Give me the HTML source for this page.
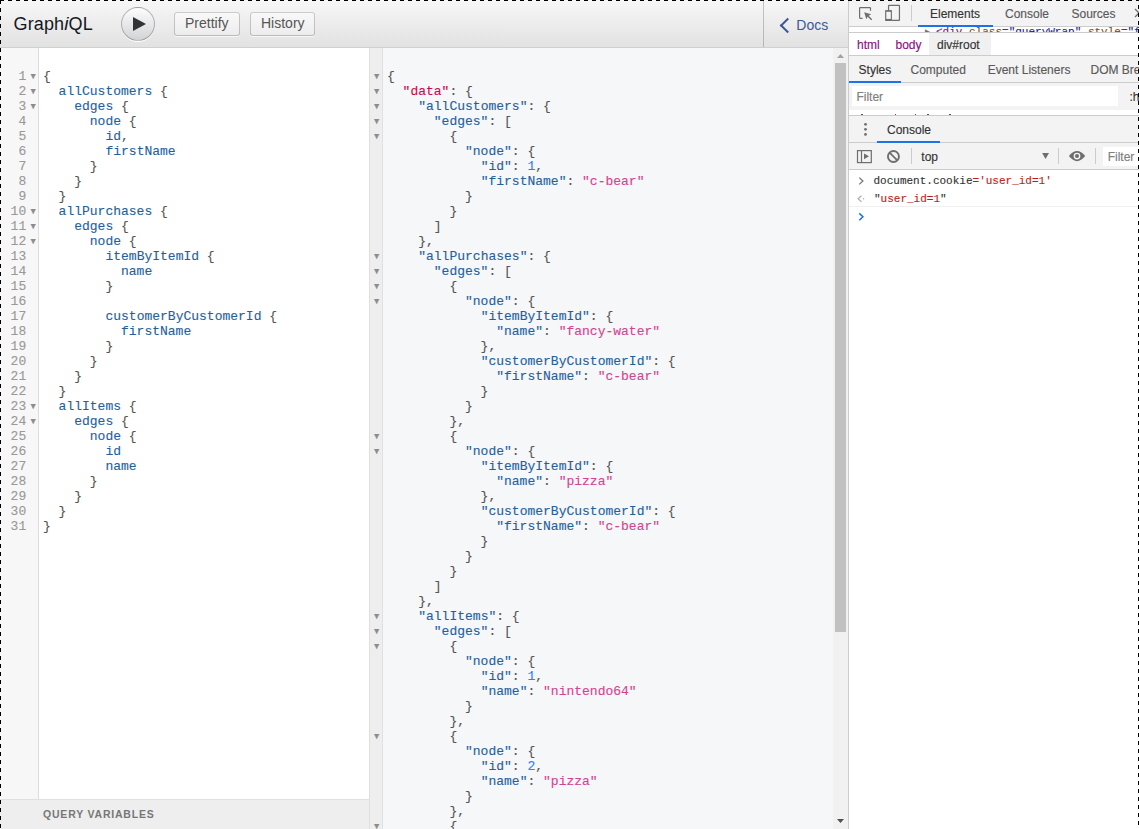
<!DOCTYPE html>
<html><head><meta charset="utf-8">
<style>
*{margin:0;padding:0;box-sizing:border-box}
html,body{width:1139px;height:829px;overflow:hidden;background:#fff}
body{position:relative;font-family:"Liberation Sans",sans-serif;color:#141823}
.abs{position:absolute}
#topbar{left:0;top:0;width:849px;height:48px;background:linear-gradient(#f7f7f7,#e2e2e2);border-bottom:1px solid #d0d0d0}
.title{left:13.6px;top:13px;letter-spacing:0.12px;font-size:18px;line-height:22px;color:#141823;white-space:nowrap}
.title i{font-style:italic;font-size:19px}
.exec{left:121px;top:7px;width:34px;height:34px;border-radius:17px;background:linear-gradient(#fdfdfd,#d2d3d6);border:1px solid rgba(0,0,0,0.25);box-shadow:0 1px 0 #fff}
.exec svg{position:absolute;left:-0.3px;top:0}
.tbtn{top:12px;height:24px;border-radius:3px;background:linear-gradient(#f9f9f9,#ececec);box-shadow:inset 0 0 0 1px rgba(0,0,0,0.20),0 1px 0 rgba(255,255,255,0.7),inset 0 1px #fff;color:#555;font-size:14px;line-height:16px;padding:3px 11px 5px;white-space:nowrap}
.docs{left:763px;top:0;width:86px;height:47px;border-left:1px solid rgba(0,0,0,0.2);color:#3B5998;font-size:14px}
.docs .chev{position:absolute;left:18px;top:20px;width:11px;height:11px;border-left:2px solid #3B5998;border-top:2px solid #3B5998;transform:rotate(-45deg)}
.docs .txt{position:absolute;left:32.3px;top:17px;line-height:16px}

/* query editor */
#qgut{left:0;top:48px;width:39px;height:751px;background:#f7f7f7;border-right:1px solid #ddd}
#qed{left:39px;top:48px;width:330px;height:751px;background:#fff}
.code{font-family:"Liberation Mono",monospace;font-size:13px;line-height:15px;white-space:pre;-webkit-text-stroke:0.12px currentColor}
#qnums{left:0;top:69px;width:26.2px;text-align:right;color:#999}
#qfold{left:29.2px;top:69px;color:#8c8c8c;font-size:13px}
#qtext{left:43px;top:69px;color:#555}
.p{color:#1F61A0}
.d{color:#D2054E}
.s{color:#D64292}
.n{color:#2882F9}
#qvars{left:0;top:799px;width:370px;height:30px;background:#eeeeee;border-top:1px solid #e0e0e0}
#qvars span{position:absolute;left:43px;top:6.7px;font-weight:bold;font-size:10.5px;letter-spacing:0.8px;color:#777;line-height:14px}

/* result */
#rwrap{left:369px;top:48px;width:480px;height:781px;border-left:1px solid #e0e0e0;background:#f6f7f8}
#rgut{left:370px;top:48px;width:13px;height:781px;background:#eeeeee;border-right:1px solid #e0e0e0}
#rfold{left:372.8px;top:69px;color:#8c8c8c;font-size:13px}
#rtext{left:387px;top:69px;color:#555}
#sb{left:833px;top:48px;width:15px;height:781px;background:#f1f1f1}
#thumb{left:835px;top:63px;width:11px;height:569px;background:#c1c1c1}
#dvline{left:848px;top:0;width:1px;height:829px;background:#ccc}

/* devtools */
#dt{left:849px;top:0;width:290px;height:829px;background:#fff;overflow:hidden;font-size:12px;color:#333}
.bar{position:absolute;left:0;width:290px;background:#f3f3f3;border-bottom:1px solid #ccc}
.tab{position:absolute;white-space:nowrap;color:#5a5a5a;line-height:14px;-webkit-text-stroke:0.15px currentColor}
.ul{position:absolute;height:2px;background:#1a73e8}
.mono{font-family:"Liberation Mono",monospace;font-size:11px;white-space:pre;-webkit-text-stroke:0.12px currentColor}

.dash{position:absolute;background-repeat:repeat}
</style></head><body>

<div id="topbar" class="abs"></div>
<div class="abs title">Graph<i>i</i>QL</div>
<div class="abs exec"><svg width="34" height="34"><path d="M 11 9 L 24 16 L 11 23 z" fill="#333"/></svg></div>
<div class="abs tbtn" style="left:174px">Prettify</div>
<div class="abs tbtn" style="left:250px;width:64.8px">History</div>
<div class="abs docs"><span class="chev"></span><span class="txt">Docs</span></div>

<div id="qgut" class="abs"></div>
<div id="qed" class="abs"></div>
<div id="qnums" class="abs code">1
2
3
4
5
6
7
8
9
10
11
12
13
14
15
16
17
18
19
20
21
22
23
24
25
26
27
28
29
30
31</div>
<div id="qfold" class="abs code">▾
▾
▾






▾
▾
▾










▾
▾






</div>
<div id="qtext" class="abs code">{
  <span class="p">allCustomers</span> {
    <span class="p">edges</span> {
      <span class="p">node</span> {
        <span class="p">id</span>,
        <span class="p">firstName</span>
      }
    }
  }
  <span class="p">allPurchases</span> {
    <span class="p">edges</span> {
      <span class="p">node</span> {
        <span class="p">itemByItemId</span> {
          <span class="p">name</span>
        }

        <span class="p">customerByCustomerId</span> {
          <span class="p">firstName</span>
        }
      }
    }
  }
  <span class="p">allItems</span> {
    <span class="p">edges</span> {
      <span class="p">node</span> {
        <span class="p">id</span>
        <span class="p">name</span>
      }
    }
  }
}</div>
<div id="qvars" class="abs"><span>QUERY VARIABLES</span></div>

<div id="rwrap" class="abs"></div>
<div id="rgut" class="abs"></div>
<div id="rfold" class="abs code">▾
▾
▾
▾
▾







▾
▾
▾
▾








▾
▾










▾
▾
▾





▾





▾</div>
<div id="rtext" class="abs code">{
  <span class="d">"data"</span>: {
    <span class="p">"allCustomers"</span>: {
      <span class="p">"edges"</span>: [
        {
          <span class="p">"node"</span>: {
            <span class="p">"id"</span>: <span class="n">1</span>,
            <span class="p">"firstName"</span>: <span class="s">"c-bear"</span>
          }
        }
      ]
    },
    <span class="p">"allPurchases"</span>: {
      <span class="p">"edges"</span>: [
        {
          <span class="p">"node"</span>: {
            <span class="p">"itemByItemId"</span>: {
              <span class="p">"name"</span>: <span class="s">"fancy-water"</span>
            },
            <span class="p">"customerByCustomerId"</span>: {
              <span class="p">"firstName"</span>: <span class="s">"c-bear"</span>
            }
          }
        },
        {
          <span class="p">"node"</span>: {
            <span class="p">"itemByItemId"</span>: {
              <span class="p">"name"</span>: <span class="s">"pizza"</span>
            },
            <span class="p">"customerByCustomerId"</span>: {
              <span class="p">"firstName"</span>: <span class="s">"c-bear"</span>
            }
          }
        }
      ]
    },
    <span class="p">"allItems"</span>: {
      <span class="p">"edges"</span>: [
        {
          <span class="p">"node"</span>: {
            <span class="p">"id"</span>: <span class="n">1</span>,
            <span class="p">"name"</span>: <span class="s">"nintendo64"</span>
          }
        },
        {
          <span class="p">"node"</span>: {
            <span class="p">"id"</span>: <span class="n">2</span>,
            <span class="p">"name"</span>: <span class="s">"pizza"</span>
          }
        },
        {</div>
<div id="sb" class="abs"></div>
<div id="thumb" class="abs"></div>
<svg class="abs" style="left:833px;top:48px" width="15" height="781" viewBox="833 48 15 781"><path d="M837 58 L840.5 54 L844 58 Z" fill="#a3a3a3"/><path d="M837 819 L844 819 L840.5 823 Z" fill="#505050"/></svg>
<div id="dvline" class="abs"></div>

<div id="dt" class="abs">
<div class="bar" style="top:0;height:27px"></div>
<div class="bar" style="top:56px;height:27px"></div>
<div class="bar" style="top:83px;height:27px;border-bottom:0"></div>
<div class="bar" style="top:116px;height:27px"></div>
<div class="bar" style="top:143px;height:27px"></div>
<div class="abs" style="left:0;top:32px;width:290px;height:1px;background:#ccc"></div>
<div class="abs" style="left:0;top:115px;width:290px;height:1px;background:#ccc"></div>
<div class="abs" style="left:0;top:55px;width:290px;height:1px;background:#ccc"></div>
<div class="abs" style="left:80px;top:33px;width:62px;height:22px;background:#f0f0f0"></div>
<div class="abs" style="left:3px;top:86px;width:266px;height:20px;background:#fff"></div>
<div class="abs" style="left:254px;top:147px;width:36px;height:19px;background:#fff"></div>
<div class="abs" style="left:0;top:206px;width:290px;height:1px;background:#f0f0f0"></div>
<div class="abs" style="left:0;top:27px;width:290px;height:5px;overflow:hidden"><div class="abs mono" style="left:76px;top:-1px;line-height:13px;color:#6e6e6e;font-size:10px">&#9654;</div><div class="abs mono" style="left:87px;top:-1.2px;line-height:13px;color:#881280"><span style="color:#881280">&lt;div</span> <span style="color:#994500">class</span>=<span style="color:#1a1aa6">"queryWrap"</span> <span style="color:#994500">style</span>=<span style="color:#1a1aa6">"f</span></div></div>
<div class="tab" style="left:81px;top:7px;color:#333">Elements</div>
<div class="tab" style="left:156px;top:7px;color:#5a5a5a">Console</div>
<div class="tab" style="left:222.5px;top:7px;color:#5a5a5a">Sources</div>
<div class="tab" style="left:8px;top:37.5px;color:#881280">html</div>
<div class="tab" style="left:46.5px;top:37.5px;color:#881280">body</div>
<div class="tab" style="left:88px;top:37.5px;color:#333">div#root</div>
<div class="tab" style="left:9.6px;top:63px;color:#333">Styles</div>
<div class="tab" style="left:61.5px;top:63px;color:#5a5a5a">Computed</div>
<div class="tab" style="left:138.7px;top:63px;color:#5a5a5a">Event Listeners</div>
<div class="tab" style="left:241.5px;top:63px;color:#5a5a5a">DOM Breakpoints</div>
<div class="tab" style="left:7.4px;top:89.8px;color:#808080">Filter</div>
<div class="tab" style="left:280.4px;top:89.8px;color:#333">:hov</div>
<div class="tab" style="left:38px;top:123px;color:#333">Console</div>
<div class="tab" style="left:72.3px;top:149.6px;color:#333">top</div>
<div class="tab" style="left:258.7px;top:149.6px;color:#808080">Filter</div>
<div class="abs mono" style="left:24.5px;top:174.5px;line-height:13px;color:#333">document.cookie<span style="color:#c41a16">='user_id=1'</span></div>
<div class="abs mono" style="left:25px;top:192.9px;line-height:13px;color:#333">"<span style="color:#c41a16">user_id=1</span>"</div>
<svg class="abs" style="left:0;top:0" width="290" height="829" viewBox="849 0 290 829">
<g fill="#ccc"><rect x="911" y="5" width="1" height="16"/><rect x="911" y="148" width="1" height="16"/><rect x="1058" y="148" width="1" height="16"/><rect x="1095" y="148" width="1" height="16"/></g>
<rect x="918" y="25" width="75" height="2" fill="#1a73e8"/>
<rect x="849" y="81" width="52" height="2" fill="#1a73e8"/>
<rect x="877" y="141" width="63" height="2" fill="#1a73e8"/>
<g fill="none" stroke="#6e6e6e" stroke-width="1.2">
<path d="M862.6 18.35 H860.3 Q859.6 18.35 859.6 17.6 V8.3 Q859.6 7.55 860.3 7.55 H869.8 Q870.5 7.55 870.5 8.3 V10.7"/>
<rect x="888.55" y="5.45" width="10.9" height="15" rx="0.4"/>
<rect x="857.5" y="150.6" width="13.8" height="12"/>
</g>
<path d="M864.2 12.2 L871.2 14.3 L868.7 15.7 L872.2 19.2 L871.2 20.2 L867.7 16.7 L866.3 19.2 Z" fill="#6e6e6e"/>
<rect x="885.1" y="10.1" width="6.8" height="10.9" fill="#6e6e6e"/>
<rect x="886.3" y="11.8" width="4.5" height="7.1" fill="#f3f3f3"/>
<rect x="860.9" y="150.6" width="1.2" height="12" fill="#6e6e6e"/>
<path d="M864 153.4 L869 156.35 L864 159.3 Z" fill="#6e6e6e"/>
<circle cx="893.45" cy="156.5" r="5.5" fill="none" stroke="#6e6e6e" stroke-width="1.9"/>
<path d="M889.6 152.6 L897.3 160.4" stroke="#6e6e6e" stroke-width="1.8"/>
<path d="M1042.1 152.9 H1049 L1045.55 159 Z" fill="#6e6e6e"/>
<path d="M1068.9 156.1 Q1077 146 1085.2 156.1 Q1077 166.2 1068.9 156.1 Z" fill="#6e6e6e"/>
<circle cx="1077" cy="156.1" r="3.4" fill="#f3f3f3"/>
<circle cx="1077" cy="156.1" r="2" fill="#6e6e6e"/>
<g fill="#6e6e6e"><circle cx="865.5" cy="124.3" r="1.4"/><circle cx="865.5" cy="129.3" r="1.4"/><circle cx="865.5" cy="134.4" r="1.4"/></g>
<path d="M1135 9 L1139 13 L1135 17" fill="none" stroke="#6e6e6e" stroke-width="1.3"/>
<path d="M859.3 177.6 L862.9 181 L859.3 184.4" fill="none" stroke="#777" stroke-width="1.3"/>
<path d="M861.5 195.7 L858.1 198.8 L861.5 201.9" fill="none" stroke="#aaa" stroke-width="1.2"/><circle cx="863.6" cy="198.8" r="0.7" fill="#aaa"/>
<path d="M859.3 213.4 L862.9 216.8 L859.3 220.2" fill="none" stroke="#1a73e8" stroke-width="1.5"/>
<g fill="#555"><rect x="861" y="114" width="2" height="1"/><rect x="895" y="114" width="1" height="1"/><rect x="915" y="114" width="1" height="1"/><rect x="927" y="114" width="2" height="1"/><rect x="949" y="114" width="2" height="1"/></g>
</svg>
</div>

<div class="abs" style="left:0;top:0;width:1139px;height:1px;background:repeating-linear-gradient(to right,#000 0 4px,transparent 4px 8px)"></div>
<div class="abs" style="left:0;top:0;width:1px;height:829px;background:repeating-linear-gradient(to bottom,#000 0 4px,transparent 4px 8px)"></div>
<div class="abs" style="left:1138px;top:0;width:1px;height:829px;background:repeating-linear-gradient(to bottom,#000 0 1px,transparent 1px 5px,#000 5px 8px)"></div>
</body></html>
